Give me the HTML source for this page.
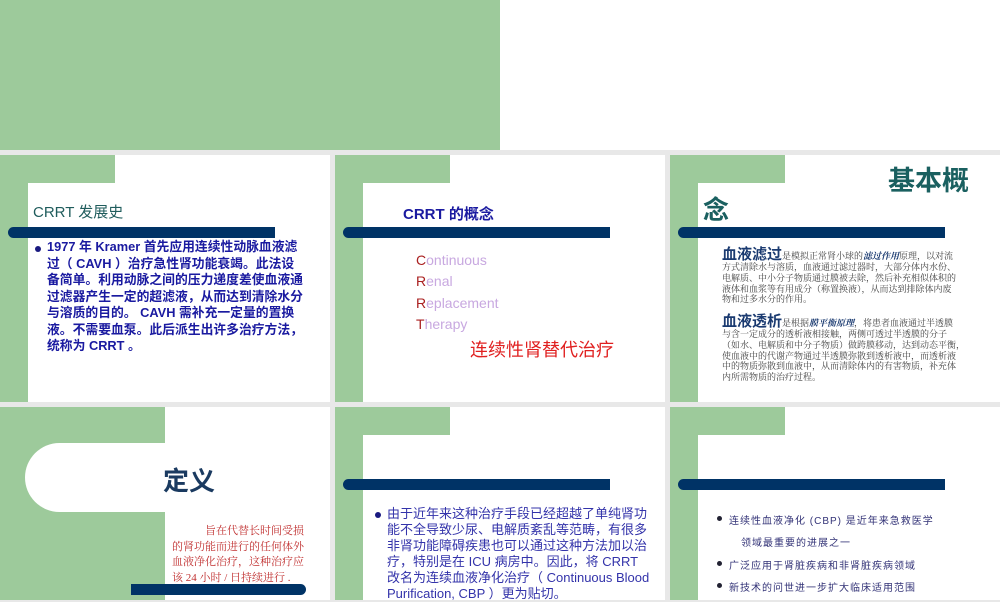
<!DOCTYPE html>
<html><head><meta charset="utf-8"><style>
*{margin:0;padding:0;box-sizing:border-box}
body{width:1000px;height:600px;overflow:hidden;background:#e8e8e8;position:relative;font-family:"Liberation Sans","Noto Sans CJK SC",sans-serif}
.a{position:absolute}
.g{background:#9dca9b}
.w{background:#fff}
.bar{position:absolute;background:#003366;height:11px;border-radius:6px 0 0 6px}
.t{position:absolute;white-space:nowrap}
.dot{position:absolute;width:6px;height:6px;border-radius:50%}
.p{position:absolute;white-space:nowrap;font-family:'Liberation Serif','Noto Serif CJK SC',serif;font-size:9px;line-height:10.8px;color:#444}
.p b.h{font-family:'Liberation Sans','Noto Sans CJK SC',sans-serif;font-size:15px;color:#1a3a70;line-height:15px}
</style></head><body>
<div class="a g" style="left:0;top:0;width:500px;height:150px"></div>
<div class="a w" style="left:500px;top:0;width:500px;height:150px"></div>

<!-- slide 1 -->
<div class="a w" style="left:0;top:155px;width:330px;height:247px"></div>
<div class="a g" style="left:0;top:155px;width:28px;height:247px"></div>
<div class="a g" style="left:0;top:155px;width:115px;height:28px"></div>
<div class="a w" style="left:28px;top:183px;width:302px;height:219px;border-top-left-radius:15px"></div>
<div class="t" style="left:33px;top:201px;font-size:15px;color:#1f5c5c">CRRT 发展史</div>
<div class="bar" style="left:8px;top:227px;width:267px"></div>
<div class="dot" style="left:35px;top:246px;background:#1a1a80"></div>
<div class="t" style="left:47px;top:239px;font-size:12.8px;line-height:16.5px;color:#1a1aa0;font-weight:bold">1977 年 Kramer 首先应用连续性动脉血液滤<br>过（ CAVH ）治疗急性肾功能衰竭。此法设<br>备简单。利用动脉之间的压力递度差使血液通<br>过滤器产生一定的超滤液，从而达到清除水分<br>与溶质的目的。 CAVH 需补充一定量的置换<br>液。不需要血泵。此后派生出许多治疗方法，<br>统称为 CRRT 。</div>

<!-- slide 2 -->
<div class="a w" style="left:335px;top:155px;width:330px;height:247px"></div>
<div class="a g" style="left:335px;top:155px;width:28px;height:247px"></div>
<div class="a g" style="left:335px;top:155px;width:115px;height:28px"></div>
<div class="a w" style="left:363px;top:183px;width:302px;height:219px;border-top-left-radius:15px"></div>
<div class="t" style="left:403px;top:203px;font-size:15px;color:#1a1aa0;font-weight:bold">CRRT 的概念</div>
<div class="bar" style="left:343px;top:227px;width:267px"></div>
<div class="t" style="left:416px;top:250px;font-size:14px;line-height:21.3px;color:#c8a8e0"><span style="color:#aa2020">C</span>ontinuous<br><span style="color:#aa2020">R</span>enal<br><span style="color:#aa2020">R</span>eplacement<br><span style="color:#aa2020">T</span>herapy</div>
<div class="t" style="left:470px;top:336px;font-size:18px;color:#e02020">连续性肾替代治疗</div>

<!-- slide 3 -->
<div class="a w" style="left:670px;top:155px;width:330px;height:247px"></div>
<div class="a g" style="left:670px;top:155px;width:28px;height:247px"></div>
<div class="a g" style="left:670px;top:155px;width:115px;height:28px"></div>
<div class="a w" style="left:698px;top:183px;width:302px;height:219px;border-top-left-radius:15px"></div>
<div class="t" style="left:888px;top:159px;font-size:27px;font-weight:bold;color:#1a6060">基本概</div>
<div class="t" style="left:703px;top:190px;font-size:26px;font-weight:bold;color:#1a6060">念</div>
<div class="bar" style="left:678px;top:227px;width:267px"></div>
<div class="p" style="left:722px;top:247px"><b class="h">血液滤过</b>是模拟正常肾小球的<b><i style="color:#1a3a70">滤过作用</i></b>原理，以对流<br>方式清除水与溶质，血液通过滤过器时，大部分体内水份、<br>电解质、中小分子物质通过膜被去除，然后补充相似体积的<br>液体和血浆等有用成分（称置换液），从而达到排除体内废<br>物和过多水分的作用。</div>
<div class="p" style="left:722px;top:314px"><b class="h">血液透析</b>是根据<b><i style="color:#1a3a70">膜平衡原理</i></b>，将患者血液通过半透膜<br>与含一定成分的透析液相接触，两侧可透过半透膜的分子<br>（如水、电解质和中分子物质）做跨膜移动，达到动态平衡，<br>使血液中的代谢产物通过半透膜弥散到透析液中，而透析液<br>中的物质弥散到血液中，从而清除体内的有害物质，补充体<br>内所需物质的治疗过程。</div>

<!-- slide 4 -->
<div class="a g" style="left:0;top:407px;width:165px;height:193px"></div>
<div class="a w" style="left:165px;top:407px;width:165px;height:193px"></div>
<div class="a w" style="left:25px;top:443px;width:140px;height:69px;border-radius:35px 0 0 35px"></div>
<div class="t" style="left:163px;top:461px;font-size:26px;font-weight:bold;color:#1a3a60">定义</div>
<div class="t" style="left:172px;top:524px;font-size:11px;line-height:15.5px;color:#c03030;font-family:'Liberation Serif','Noto Serif CJK SC',serif">　　　旨在代替长时间受损<br>的肾功能而进行的任何体外<br>血液净化治疗，这种治疗应<br>该 24 小时 / 日持续进行 .</div>
<div class="a" style="left:131px;top:584px;width:175px;height:11px;background:#003366;border-radius:0 6px 6px 0"></div>

<!-- slide 5 -->
<div class="a w" style="left:335px;top:407px;width:330px;height:193px"></div>
<div class="a g" style="left:335px;top:407px;width:28px;height:193px"></div>
<div class="a g" style="left:335px;top:407px;width:115px;height:28px"></div>
<div class="a w" style="left:363px;top:435px;width:302px;height:165px;border-top-left-radius:15px"></div>
<div class="bar" style="left:343px;top:479px;width:267px"></div>
<div class="dot" style="left:375px;top:512px;background:#1a1a80"></div>
<div class="t" style="left:387px;top:506px;font-size:13px;line-height:16px;color:#3333aa">由于近年来这种治疗手段已经超越了单纯肾功<br>能不全导致少尿、电解质紊乱等范畴，有很多<br>非肾功能障碍疾患也可以通过这种方法加以治<br>疗，特别是在 ICU 病房中。因此，将 CRRT<br>改名为连续血液净化治疗（ Continuous Blood<br>Purification, CBP ）更为贴切。</div>

<!-- slide 6 -->
<div class="a w" style="left:670px;top:407px;width:330px;height:193px"></div>
<div class="a g" style="left:670px;top:407px;width:28px;height:193px"></div>
<div class="a g" style="left:670px;top:407px;width:115px;height:28px"></div>
<div class="a w" style="left:698px;top:435px;width:302px;height:165px;border-top-left-radius:15px"></div>
<div class="bar" style="left:678px;top:479px;width:267px"></div>
<div class="dot" style="left:717px;top:516px;width:5px;height:5px;background:#223"></div>
<div class="t" style="left:729px;top:512px;font-size:10px;letter-spacing:1px;color:#333377">连续性血液净化 (CBP) 是近年来急救医学</div>
<div class="t" style="left:741px;top:534px;font-size:10px;letter-spacing:1px;color:#333377">领域最重要的进展之一</div>
<div class="dot" style="left:717px;top:561px;width:5px;height:5px;background:#223"></div>
<div class="t" style="left:729px;top:557px;font-size:10px;letter-spacing:1px;color:#333377">广泛应用于肾脏疾病和非肾脏疾病领域</div>
<div class="dot" style="left:717px;top:583px;width:5px;height:5px;background:#223"></div>
<div class="t" style="left:729px;top:579px;font-size:10px;letter-spacing:1px;color:#333377">新技术的问世进一步扩大临床适用范围</div>
</body></html>
